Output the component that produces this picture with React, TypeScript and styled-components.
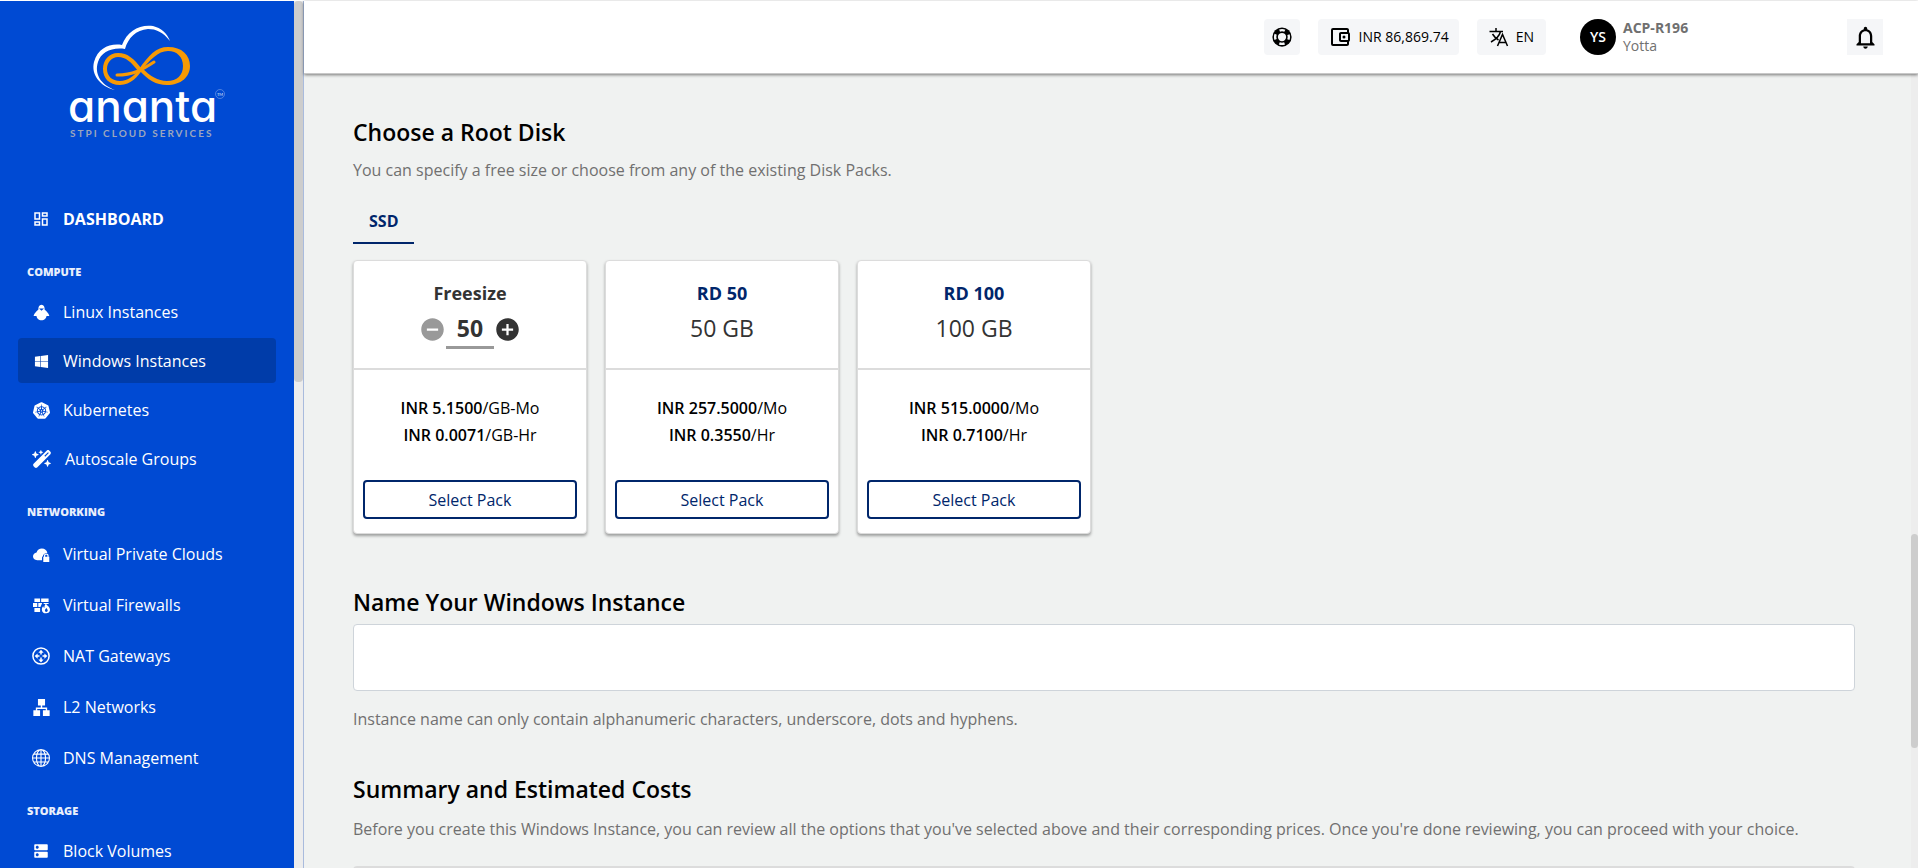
import React from "react";
import styled, { createGlobalStyle } from "styled-components";
import {
  MdOutlineDashboard,
  MdDns,
  MdNotificationsNone,
  MdRemoveCircle,
  MdAddCircle,
  MdOutlineAccountBalanceWallet,
} from "react-icons/md";
import { FaWindows, FaWandMagicSparkles } from "react-icons/fa6";
import { SiKubernetes } from "react-icons/si";
import { BsGlobe } from "react-icons/bs";

const navy = "#00266b";
const line = "#dcdcdc";

const GlobalStyle = createGlobalStyle`
  * { box-sizing: border-box; }
  body { margin: 0; font-family: "Open Sans", "Noto Sans", sans-serif; font-size: 16px; line-height: 24px; color: #000; background: #fff; }
  h2, h3, p { margin: 0; }
  button, input { font: inherit; }
`;

const Shell = styled.div`
  display: flex;
  height: 100vh;
  padding-top: 1px;
  overflow: hidden;
`;

const Sidebar = styled.aside`
  flex: 0 0 294px;
  overflow: hidden;
  background: #004ad3;
  color: #fff;
`;

const Rail = styled.div<{ $wide?: boolean }>`
  flex: 0 0 ${(p) => (p.$wide ? 10 : 7)}px;
  background: #ededed;
  border-right: ${(p) => (p.$wide ? "1px solid #a9bbdd" : "0")};
`;

const Thumb = styled.div<{ $top: number; $size: number }>`
  height: ${(p) => p.$size}%;
  margin-top: ${(p) => p.$top}vh;
  border-radius: 4px;
  background: #cdcdcd;
`;

const LogoLink = styled.a`
  display: block;
  height: 195px;
  padding: 19px 0 0 64px;
`;

const NavLink = styled.a<{ $active?: boolean; $strong?: boolean }>`
  display: flex;
  align-items: center;
  gap: 13px;
  height: 45px;
  padding: 0 14px;
  border-radius: 4px;
  color: #fff;
  text-decoration: none;
  font-weight: ${(p) => (p.$strong ? 700 : 500)};
  background: ${(p) => (p.$active ? "#003ca9" : "transparent")};
`;

const IconSlot = styled.span`
  display: grid;
  place-items: center;
  min-width: 18px;
  padding-top: 1px;
`;

const NavGroup = styled.section<{ $gap: number }>`
  display: flex;
  flex-direction: column;
  gap: ${(p) => p.$gap}px;
  padding: 0 18px;
`;

const NavHeading = styled.h3`
  margin: 23px 9px 5px;
  font-size: 11px;
  line-height: 16px;
  font-weight: 800;
  color: #e9effb;
`;

const Page = styled.div`
  flex: 1;
  min-width: 0;
  display: flex;
  flex-direction: column;
`;

const Header = styled.header`
  position: relative;
  display: flex;
  align-items: center;
  justify-content: flex-end;
  flex: none;
  height: 73px;
  padding-right: 35px;
  background: #fff;
  border-bottom: 1px solid #c8c8c8;
  box-shadow: 0 1px 3px rgba(0, 0, 0, 0.5);
  font-size: 14px;
  line-height: 18px;
`;

const Tool = styled.button<{ $pad: number }>`
  display: flex;
  align-items: center;
  justify-content: center;
  gap: 7px;
  height: 36px;
  min-width: 36px;
  margin-right: 18px;
  padding: 0 ${(p) => p.$pad}px;
  border: 0;
  border-radius: 4px;
  background: #f5f6f8;
  color: #000;
`;

const Bell = styled(Tool)`
  margin-right: 0;
  border-radius: 0;
`;

const Account = styled.div`
  display: flex;
  align-items: center;
  gap: 7px;
  width: 283px;
  padding-left: 16px;
  color: #707070;
`;

const Avatar = styled.div`
  display: grid;
  place-items: center;
  width: 36px;
  height: 36px;
  border-radius: 50%;
  background: #000;
  color: #fff;
  font-weight: 600;
`;

const Body = styled.div`
  flex: 1;
  min-height: 0;
  display: flex;
  background: #f0f2f1;
`;

const Main = styled.main`
  flex: 1;
  min-width: 0;
  overflow: hidden;
  padding: 40px 56px 0 49px;
`;

const Title = styled.h2<{ $gap: number }>`
  margin-bottom: ${(p) => p.$gap}px;
  font-size: 23px;
  line-height: 36px;
  font-weight: 600;
`;

const Note = styled.p`
  color: #707070;
`;

const Tabs = styled.div`
  display: flex;
  margin: 18px 0 16px;
`;

const Tab = styled.button`
  height: 44px;
  padding: 0 16px;
  border: 0;
  border-bottom: 2px solid ${navy};
  background: none;
  color: ${navy};
  font-weight: 700;
`;

const Packs = styled.div`
  display: flex;
  gap: 18px;
`;

const Card = styled.article`
  width: 234px;
  border: 1px solid ${line};
  border-radius: 4px;
  background: #fff;
  box-shadow: 0 2px 3px rgba(0, 0, 0, 0.35);
  text-align: center;
`;

const CardTop = styled.div`
  height: 109px;
  padding-top: 19px;
  border-bottom: 2px solid ${line};
  color: #333;
`;

const PackName = styled.h3<{ $blue?: boolean }>`
  font-size: 18px;
  line-height: 26px;
  font-weight: 700;
  color: ${(p) => (p.$blue ? navy : "#333")};
`;

const Size = styled.p`
  margin-top: 4px;
  font-size: 23px;
  line-height: 36px;
`;

const Stepper = styled.div`
  display: flex;
  align-items: center;
  justify-content: center;
  height: 46px;
`;

const Step = styled.button`
  display: grid;
  padding: 0;
  border: 0;
  background: none;
  color: #333;
  &:disabled { color: #999; }
`;

const SizeInput = styled.input`
  width: 48px;
  height: 40px;
  padding: 0;
  border: 0;
  border-bottom: 3px solid #999;
  background: none;
  color: #333;
  font-size: 23px;
  font-weight: 700;
  text-align: center;
`;

const Prices = styled.div`
  padding: 25px 0 31px;
  line-height: 27px;
  b { font-weight: 600; }
`;

const Select = styled.button`
  display: block;
  width: calc(100% - 18px);
  height: 39px;
  margin: 0 9px 14px;
  border: 2px solid ${navy};
  border-radius: 4px;
  background: #fff;
  color: ${navy};
`;

const NameField = styled.div`
  margin: 50px 0 40px;
  label { display: block; font-size: 23px; line-height: 36px; font-weight: 600; }
  p { margin-top: 16px; }
`;

const NameInput = styled.input`
  display: block;
  width: 100%;
  height: 67px;
  margin-top: 4px;
  padding: 0 16px;
  border: 1px solid #ced4da;
  border-radius: 4px;
  background: #fff;
`;

const Summary = styled.div`
  height: 200px;
  margin-top: 25px;
  border: 2px solid ${line};
  border-radius: 4px;
  background: #fff;
`;

const LogoText = styled.text`
  font-family: Inter, sans-serif;
  font-feature-settings: "cv11";
  font-size: 44px;
  font-weight: 500;
  fill: #fff;
`;

const Tagline = styled.text`
  font-family: Lato, sans-serif;
  font-size: 10px;
  font-weight: 700;
  letter-spacing: 2px;
  fill: #9ca6bd;
`;

const Mark = styled.text`
  font-family: Lato, sans-serif;
  font-size: 4px;
  fill: #dfe8fa;
`;

const Glyph = ({ size, children }: { size: number; children: React.ReactNode }) => (
  <svg width={size} height={size} viewBox="0 0 24 24" fill="currentColor" aria-hidden="true">
    {children}
  </svg>
);

const Logo = () => (
  <svg width="170" height="122" viewBox="64 20 170 122">
    <path d="M115 90C99 86 91 74 94 62C98 48 110 43 122 45C127 31 140 24 153 26C161 28 167 33 170 41C163 32 156 29 148 29C136 30 128 38 125 49C112 47 101 52 98 62C94 74 101 85 115 90Z" fill="#fff" />
    <g fill="#f79a05">
      <path d="M139 69C149 55 156 47 168 47C182 47 190 55 190 66C190 77 181 85 167 85C156 85 148 80 139 70L142 68C150 76 158 81 167 81C177 81 183 75 183 66C183 57 177 51 168 51C158 51 150 60 141 71Z" />
      <path d="M141 68C134 59 128 53 118 53C109 53 103 60 103 69C103 78 109 85 120 85C131 85 138 76 143 69L140 68C134 76 128 81 120 81C112 81 107 76 107 69C107 62 112 57 118 57C126 57 131 62 138 71Z" />
    </g>
    <path d="M117 75C133 75 142 70 154 62" fill="none" stroke="#f79a05" strokeWidth="3" strokeLinecap="round" />
    <LogoText x="68" y="122">ananta</LogoText>
    <circle cx="220" cy="94" r="4.5" fill="none" stroke="#7fa4e9" strokeWidth=".6" />
    <Mark x="217" y="96">TM</Mark>
    <Tagline x="70" y="137">STPI CLOUD SERVICES</Tagline>
  </svg>
);

const PenguinIcon = () => (
  <Glyph size={17}>
    <path d="M12 1C8.500 1 7.500 4 7.500 8C5 10 1 14 1 17L5 17C5 20 8 23 12 23C16 23 19 20 19 17L23 17C23 14 19 10 16.500 8C16.500 4 15.500 1 12 1Z" />
    <path d="M8.500 6.500H15.500L12 9.500Z" fill="#004ad3" />
  </Glyph>
);

const CloudLockIcon = () => (
  <Glyph size={17}>
    <path d="M6 20C2 20 0 17.500 0 14.500C0 11.500 2.500 9.500 5 9C6 5.500 9 3.500 12.500 3.500C16.500 3.500 19.500 6 20.300 9.500C16.500 9.800 14 12 14 14.500C13 15 12.700 16 12.700 17V20Z" />
    <path d="M15.500 15V13.500C15.500 11.800 17 10.700 18.800 10.700C20.600 10.700 22 11.800 22 13.500V15H23V22.500H14.500V15ZM17.200 15H20.300V13.700C20.300 12 17.200 12 17.200 13.700Z" />
  </Glyph>
);

const FirewallIcon = () => (
  <Glyph size={17}>
    <path d="M2 2H10V7H2ZM11.500 2H22V7H11.500ZM0 8.500H6V14H0ZM7.500 8.500H13L10.500 14H7.500ZM2 15.500H10V21H2ZM15 8.500H22V10H15Z" />
    <path d="M18.500 9C19 12 24 13 24 18C24 21.500 21.500 23 18.500 23C15 23 12.500 21 12.500 17.500C12.500 15.500 13.500 14 14.500 13C14.700 14.500 15.500 15.200 16.200 15.300C16 13 16.500 10.500 18.500 9ZM18.800 15C18.500 16.500 16.800 17 16.800 19C16.800 20.300 17.700 21 18.700 21C20 21 20.800 20 20.800 19C20.800 17.500 19.500 16.500 18.800 15Z" />
  </Glyph>
);

const NatIcon = () => (
  <Glyph size={18}>
    <circle cx="12" cy="12" r="10.800" fill="none" stroke="currentColor" strokeWidth="2" />
    <path d="M12 3.500L15.500 7.500H13V10H11V7.500H8.500ZM12 20.500L8.500 16.500H11V14H13V16.500H15.500ZM3.500 12L7.500 8.500V11H10V13H7.500V15.500ZM20.500 12L16.500 15.500V13H14V11H16.500V8.500Z" />
  </Glyph>
);

const NetworkIcon = () => (
  <Glyph size={17}>
    <path d="M7 0H17V9H13V12H20V16H23.500V24H14V16H18V14H6V16H10V24H.500V16H4V12H11V9H7Z" />
  </Glyph>
);

const SupportIcon = () => (
  <Glyph size={22}>
    <circle cx="12" cy="12" r="10.500" />
    <circle cx="12" cy="12" r="4.500" fill="#f5f6f8" />
    <circle cx="12" cy="12" r="7.500" fill="none" stroke="#f5f6f8" strokeWidth="2.600" strokeDasharray="5.890 5.890" strokeDashoffset="2.945" />
  </Glyph>
);

const TranslateIcon = () => (
  <svg width="20" height="20" viewBox="0 0 20 20" fill="none" stroke="currentColor" strokeWidth="1.500" aria-hidden="true">
    <path d="M.500 4.500H14M7 1V4.500M11.500 4.500C10.500 9 6.500 12.500 2 15M3.500 7C5 9.500 7 11.500 9.500 13M8.500 19L13.500 7.500L18.500 19M10.200 15.500H16.800" />
  </svg>
);

const compute = [
  { label: "Linux Instances", icon: <PenguinIcon /> },
  { label: "Windows Instances", icon: <FaWindows size={15} />, active: true },
  { label: "Kubernetes", icon: <SiKubernetes size={17} /> },
  { label: "Autoscale Groups", icon: <FaWandMagicSparkles size={20} /> },
];

const network = [
  { label: "Virtual Private Clouds", icon: <CloudLockIcon /> },
  { label: "Virtual Firewalls", icon: <FirewallIcon /> },
  { label: "NAT Gateways", icon: <NatIcon /> },
  { label: "L2 Networks", icon: <NetworkIcon /> },
  { label: "DNS Management", icon: <BsGlobe size={18} /> },
];

const packs = [
  { name: "Freesize", size: "", mo: "INR 5.1500", hr: "INR 0.0071", unit: "/GB-" },
  { name: "RD 50", size: "50 GB", mo: "INR 257.5000", hr: "INR 0.3550", unit: "/" },
  { name: "RD 100", size: "100 GB", mo: "INR 515.0000", hr: "INR 0.7100", unit: "/" },
];

type Entry = { label: string; icon: React.ReactNode; active?: boolean; strong?: boolean };

const NavItem = ({ label, icon, active, strong }: Entry) => (
  <NavLink href="#" $active={active} $strong={strong}>
    <IconSlot>{icon}</IconSlot>
    {label}
  </NavLink>
);

export default function App() {
  return (
    <>
      <GlobalStyle />
      <Shell>
        <Sidebar>
          <LogoLink href="#"><Logo /></LogoLink>
          <nav>
            <NavGroup $gap={0}>
              <NavItem label="DASHBOARD" icon={<MdOutlineDashboard size={18} />} strong />
            </NavGroup>
            <NavGroup $gap={4}>
              <NavHeading>COMPUTE</NavHeading>
              {compute.map((item) => <NavItem key={item.label} {...item} />)}
            </NavGroup>
            <NavGroup $gap={6}>
              <NavHeading>NETWORKING</NavHeading>
              {network.map((item) => <NavItem key={item.label} {...item} />)}
            </NavGroup>
            <NavGroup $gap={4}>
              <NavHeading>STORAGE</NavHeading>
              <NavItem label="Block Volumes" icon={<MdDns size={18} />} />
            </NavGroup>
          </nav>
        </Sidebar>
        <Rail $wide><Thumb $top={0} $size={44} /></Rail>
        <Page>
          <Header>
            <Tool aria-label="Support" $pad={0}><SupportIcon /></Tool>
            <Tool $pad={10}><MdOutlineAccountBalanceWallet size={24} />INR 86,869.74</Tool>
            <Tool $pad={12}><TranslateIcon />EN</Tool>
            <Account>
              <Avatar>YS</Avatar>
              <div><b>ACP-R196</b><br />Yotta</div>
            </Account>
            <Bell aria-label="Notifications" $pad={0}><MdNotificationsNone size={27} /></Bell>
          </Header>
          <Body>
            <Main>
              <Title $gap={8}>Choose a Root Disk</Title>
              <Note>You can specify a free size or choose from any of the existing Disk Packs.</Note>
              <Tabs><Tab>SSD</Tab></Tabs>
              <Packs>
                {packs.map((p) => (
                  <Card key={p.name}>
                    <CardTop>
                      <PackName $blue={!!p.size}>{p.name}</PackName>
                      {p.size ? <Size>{p.size}</Size> : (
                        <Stepper>
                          <Step aria-label="Decrease" disabled><MdRemoveCircle size={27} /></Step>
                          <SizeInput aria-label="Disk size in GB" defaultValue="50" />
                          <Step aria-label="Increase"><MdAddCircle size={27} /></Step>
                        </Stepper>
                      )}
                    </CardTop>
                    <Prices>
                      <p><b>{p.mo}</b>{p.unit}Mo</p>
                      <p><b>{p.hr}</b>{p.unit}Hr</p>
                    </Prices>
                    <Select>Select Pack</Select>
                  </Card>
                ))}
              </Packs>
              <NameField>
                <label htmlFor="instance-name">Name Your Windows Instance</label>
                <NameInput id="instance-name" />
                <Note>Instance name can only contain alphanumeric characters, underscore, dots and hyphens.</Note>
              </NameField>
              <Title $gap={10}>Summary and Estimated Costs</Title>
              <Note>Before you create this Windows Instance, you can review all the options that you've selected above and their corresponding prices. Once you're done reviewing, you can proceed with your choice.</Note>
              <Summary />
            </Main>
            <Rail><Thumb $top={53} $size={27} /></Rail>
          </Body>
        </Page>
      </Shell>
    </>
  );
}
